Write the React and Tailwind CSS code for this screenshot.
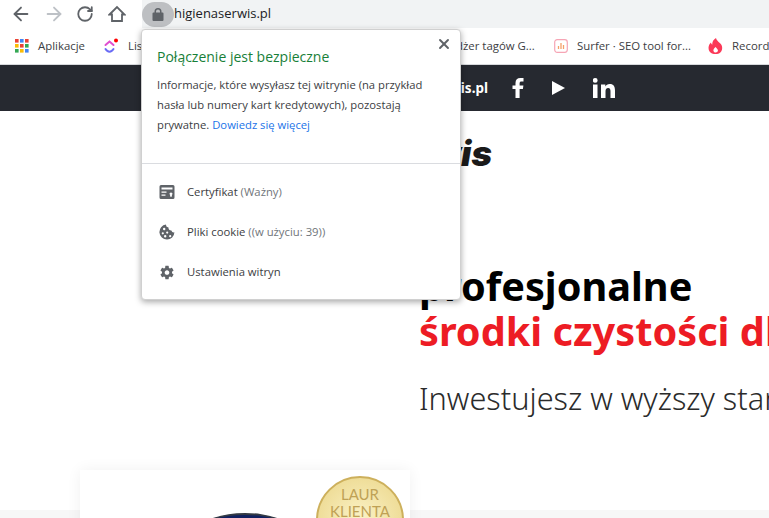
import React from 'react';
import { ArrowLeft, ArrowRight, RotateCw, X } from 'lucide-react';

const chromeFont = { fontFamily: '"Open Sans", "Noto Sans", sans-serif' };

const AppsIcon = () => (
  <svg width="14" height="14" viewBox="0 0 14 14">
    {[
      ['#ea4335', '#4285f4', '#ea4335'],
      ['#fbbc04', '#ea4335', '#34a853'],
      ['#34a853', '#fbbc04', '#4285f4'],
    ].map((row, y) =>
      row.map((c, x) => <rect key={`${x}-${y}`} x={x * 5} y={y * 5} width="3.6" height="3.6" fill={c} />)
    )}
  </svg>
);

const ClickUpIcon = () => (
  <svg width="16" height="16" viewBox="0 0 16 16" fill="none" strokeWidth="2" strokeLinecap="round">
    <path d="M2.500 7 6.500 3.500 10.500 7" stroke="#e04fd0" />
    <path d="M2.500 11C4.500 14.500 8.500 14.500 10.500 11" stroke="#6a6cf5" />
    <circle cx="13" cy="2.500" r="2" fill="#f00" />
  </svg>
);

const SurferIcon = () => (
  <svg width="14" height="14" viewBox="0 0 14 14" fill="none">
    <rect x="0.7" y="0.7" width="12.6" height="12.6" rx="2.5" stroke="#f6a5b5" strokeWidth="1.2" />
    <path d="M4.500 10V7M7 10V4M9.500 10V6" stroke="#f4a06a" strokeWidth="1.3" />
  </svg>
);

const FlameIcon = () => (
  <svg width="15" height="16" viewBox="0 0 15 16">
    <path
      fill="#fb3958"
      fillRule="evenodd"
      d="M8 0c.5 3 4 4.500 5.500 7 1.500 3 .5 7-2.500 8.500-2 .8-5 .8-7 0C1 14 0 11 .8 8c.4-1.500 1.200-2.500 2.200-3.500.2 1 .5 1.800 1.300 2.300C4 4 5.500 1.500 8 0ZM7.500 9c-1 1.200-2.500 2.300-2 4 .4 1 1.300 1.500 2.200 1.500 1 0 2-.6 2.200-1.700.3-1.500-1.400-2.500-2.400-3.800Z"
    />
  </svg>
);

const HomeIcon = () => (
  <svg width="18" height="18" viewBox="0 0 18 18" fill="none" stroke="#5f6368" strokeWidth="1.800" strokeLinejoin="miter">
    <path d="M1.500 9.500 9 2l7.500 7.500H14v6.500H4V9.500Z" />
  </svg>
);

const LockIcon = () => (
  <svg width="12" height="13" viewBox="0 0 12 13">
    <path
      fill="#5f6368"
      fillRule="evenodd"
      d="M2.500 4.500V3.500a3.500 3.500 0 0 1 7 0v1h1a1 1 0 0 1 1 1V12a1 1 0 0 1-1 1h-9a1 1 0 0 1-1-1V5.500a1 1 0 0 1 1-1h1Zm1.500 0h4V3.500a2 2 0 0 0-4 0v1Z"
    />
  </svg>
);

const CertIcon = () => (
  <svg width="16" height="16" viewBox="0 0 16 16">
    <path
      fill="#5f6368"
      fillRule="evenodd"
      d="M2 1h12a1.500 1.500 0 0 1 1.500 1.500v11A1.500 1.500 0 0 1 14 15H2a1.500 1.500 0 0 1-1.500-1.500v-11A1.500 1.500 0 0 1 2 1Zm.5 2.500v2h11v-2h-11Zm0 4v1.300h5V7.500h-5Zm0 3v1.300h4v-1.300h-4Zm9.500-2.300-1.900 1.900 1 .4v2.500l.9-.7.900.7V10.500l1-.4L12 8.200Z"
    />
  </svg>
);

const CookieIcon = () => (
  <svg width="16" height="16" viewBox="0 0 16 16">
    <path
      fill="#5f6368"
      fillRule="evenodd"
      d="M7 .6a2.800 2.800 0 0 0 2.500 3 2.800 2.800 0 0 0 2.900 2.900 2.600 2.600 0 0 0 3 1.800A7.500 7.500 0 1 1 7 .6ZM5.200 3.800a1.200 1.200 0 1 0 0 2.400 1.200 1.200 0 0 0 0-2.400Zm-1.400 4.400a1.100 1.100 0 1 0 0 2.200 1.100 1.100 0 0 0 0-2.200Zm4.400-.7a1.100 1.100 0 1 0 0 2.200 1.100 1.100 0 0 0 0-2.200Zm-2 3.600a1.200 1.200 0 1 0 0 2.400 1.200 1.200 0 0 0 0-2.400Zm5 0a1.100 1.100 0 1 0 0 2.200 1.100 1.100 0 0 0 0-2.200Z"
    />
  </svg>
);

const GearIcon = () => (
  <svg width="17" height="17" viewBox="0 0 24 24">
    <path
      fill="#5f6368"
      d="M19.430 12.980c.040-.320.070-.640.070-.980s-.030-.660-.070-.980l2.110-1.650c.190-.150.240-.420.120-.640l-2-3.460c-.120-.220-.390-.300-.610-.220l-2.490 1c-.520-.400-1.080-.730-1.690-.980l-.380-2.650A.488.488 0 0 0 14 2h-4c-.250 0-.460.180-.490.420l-.380 2.650c-.610.250-1.170.590-1.690.980l-2.490-1c-.230-.090-.490 0-.610.220l-2 3.460c-.130.220-.070.490.120.640l2.110 1.650c-.040.320-.070.650-.070.980s.030.660.070.980l-2.110 1.650c-.190.150-.240.420-.120.640l2 3.460c.120.220.390.300.610.220l2.490-1c.520.400 1.080.730 1.690.980l.380 2.650c.030.240.240.420.490.420h4c.250 0 .460-.180.490-.420l.380-2.650c.610-.250 1.170-.590 1.690-.980l2.490 1c.230.090.490 0 .610-.220l2-3.460c.120-.220.070-.490-.120-.640l-2.110-1.650ZM12 15.500c-1.930 0-3.500-1.570-3.500-3.500s1.570-3.500 3.500-3.500 3.500 1.570 3.500 3.500-1.570 3.500-3.500 3.500Z"
    />
  </svg>
);

const Bookmark = ({ icon, label, className }) => (
  <div className={`flex items-center gap-[9px] shrink-0 ${className}`}>
    {icon}
    <span className="text-[11.4px] text-[#3c4043] whitespace-nowrap">{label}</span>
  </div>
);

const PopupRow = ({ icon, children }) => (
  <div className="h-10 flex items-center gap-[12px] pl-[17px]">
    <span className="w-4 flex justify-center">{icon}</span>
    <span className="text-[11.3px] text-[#3c4043] whitespace-nowrap">{children}</span>
  </div>
);

const SecurityPopup = () => (
  <div
    style={chromeFont}
    className="absolute left-[141px] top-[29px] w-[320px] h-[271px] bg-white rounded-[4px] border border-[#d0d0d0] shadow-[0_2px_6px_rgba(0,0,0,0.35)] z-10"
  >
    <button className="absolute right-[8px] top-[6px] text-[#5f6368]">
      <X size={16} strokeWidth={2.8} />
    </button>
    <div className="h-[134px] pl-[15px] pr-[10px] pt-[17px] border-b border-[#dadce0]">
      <div className="text-[14px] leading-5 text-[#188038]">Połączenie jest bezpieczne</div>
      <p className="mt-[8px] text-[11.25px] leading-[20px] text-[#3c4043]">
        Informacje, które wysyłasz tej witrynie (na przykład
        <br />
        hasła lub numery kart kredytowych), pozostają
        <br />
        prywatne. <span className="text-[#1a73e8]">Dowiedz się więcej</span>
      </p>
    </div>
    <div className="pt-[8px]">
      <PopupRow icon={<CertIcon />}>
        Certyfikat <span className="text-[#70757a]">(Ważny)</span>
      </PopupRow>
      <PopupRow icon={<CookieIcon />}>
        Pliki cookie <span className="text-[#70757a]">((w użyciu: 39))</span>
      </PopupRow>
      <PopupRow icon={<GearIcon />}>Ustawienia witryn</PopupRow>
    </div>
  </div>
);

const ChromeBars = () => (
  <div style={chromeFont}>
    <div className="h-[28px] bg-white flex items-center">
      <div className="w-[142px] flex items-center pl-[10px] text-[#5f6368]">
        <ArrowLeft size={22} strokeWidth={2} className="mr-[11px]" />
        <ArrowRight size={22} strokeWidth={2} className="text-[#bdc1c6] mr-[11px]" />
        <RotateCw size={18} strokeWidth={2.4} className="mr-[14px]" />
        <HomeIcon />
      </div>
      <div className="flex-1 h-full bg-[#f1f3f4] flex items-center">
        <div className="w-[32px] h-[25px] rounded-full bg-[#bdbfc2] flex items-center justify-center">
          <LockIcon />
        </div>
        <span className="text-[13px] text-[#202124]">higienaserwis.pl</span>
      </div>
    </div>
    <div className="h-[37px] bg-white border-b border-[#d7d9dc] flex items-center pl-[15px] overflow-hidden">
      <Bookmark icon={<AppsIcon />} label="Aplikacje" className="w-[88px]" />
      <Bookmark icon={<ClickUpIcon />} label="Lista" className="w-[300px] gap-[7px]" />
      <Bookmark icon={<span className="w-[14px] h-[14px] bg-[#4285f4]" />} label="Menedżer tagów G..." className="w-[151px]" />
      <Bookmark icon={<SurferIcon />} label="Surfer · SEO tool for..." className="w-[154px]" />
      <Bookmark icon={<FlameIcon />} label="Record" />
    </div>
  </div>
);

const Medal = () => (
  <svg width="90" height="48" viewBox="0 0 90 48" className="absolute right-[5px] top-[5px]">
    <defs>
      <radialGradient id="gold" cx="0.5" cy="0.5" r="0.6">
        <stop offset="0" stopColor="#fbf3c8" />
        <stop offset="1" stopColor="#ecd88e" />
      </radialGradient>
    </defs>
    <circle cx="45" cy="45" r="43" fill="url(#gold)" stroke="#cdb05c" strokeWidth="2" />
    <text x="45" y="25" textAnchor="middle" fontSize="15" fill="#bfa155" fontFamily="Lato, sans-serif">LAUR</text>
    <text x="45" y="42" textAnchor="middle" fontSize="15" fill="#bfa155" fontFamily="Lato, sans-serif">KLIENTA</text>
  </svg>
);

const Page = () => (
  <div style={{ fontFamily: '"Noto Sans", Lato, sans-serif' }}>
    <div className="h-[46px] bg-[#262930] flex items-center justify-end pr-[154px] gap-[28px] text-white">
      <span className="font-bold text-[13.5px] -mr-[4px]">biuro@higienaserwis.pl</span>
      <svg width="12" height="20" viewBox="0 0 12 20" fill="white">
        <path d="M3.500 20v-9H.5V7.500h3V5C3.500 1.800 5.300 0 8.300 0H11.500v3.400H9.500C8.200 3.400 7.600 4 7.600 5.200v2.300h3.800l-.5 3.500H7.600v9Z" />
      </svg>
      <svg width="13" height="14" viewBox="0 0 13 14" fill="white">
        <path d="M0 0l13 7-13 7Z" />
      </svg>
      <svg width="22" height="20" viewBox="0 0 22 20" fill="white">
        <path d="M0 6.500h4.500V20H0ZM2.250 0a2.400 2.400 0 1 1 0 4.800 2.400 2.400 0 0 1 0-4.800ZM8 6.500h4.300v1.900c.8-1.300 2.300-2.300 4.400-2.300 4 0 5.300 2.500 5.300 6.400V20h-4.500v-6.500c0-2-.5-3.500-2.300-3.500-2 0-2.700 1.500-2.700 3.500V20H8Z" />
      </svg>
    </div>
    <div className="h-[399px] flex bg-white">
      <div className="w-[419px] shrink-0 pt-[359px] pl-[80px]">
        <div className="relative w-[330px] h-[80px] bg-white shadow-[0_0_14px_rgba(0,0,0,0.06)] z-[1]">
          <div className="absolute left-[122px] top-[43px] w-[86px] h-[30px] rounded-[50%] bg-[#10205f] border-t-2 border-[#333a44]" />
          <Medal />
        </div>
      </div>
      <div className="flex-1 min-w-0 overflow-hidden relative">
        <div
          style={{ fontFamily: 'Inter, sans-serif' }}
          className="absolute right-[277px] top-[20px] text-[35px] leading-[44px] font-black italic text-[#1a1a1a] whitespace-nowrap"
        >
          higienaserwis
        </div>
        <h1 className="mt-[153px] text-[39.7px] leading-[45px] font-bold text-black whitespace-nowrap">
          profesjonalne
          <br />
          <span className="text-[#ed1c24]">środki czystości dla firm</span>
        </h1>
        <p className="mt-[24px] text-[30.7px] leading-[40px] font-light text-[#2b2b2b] whitespace-nowrap">
          Inwestujesz w wyższy standard
        </p>
      </div>
    </div>
    <div className="h-[8px] bg-[#f7f7f7]" />
  </div>
);

export default function App() {
  return (
    <div className="relative w-[769px] h-[518px] overflow-hidden bg-white">
      <ChromeBars />
      <Page />
      <SecurityPopup />
    </div>
  );
}
